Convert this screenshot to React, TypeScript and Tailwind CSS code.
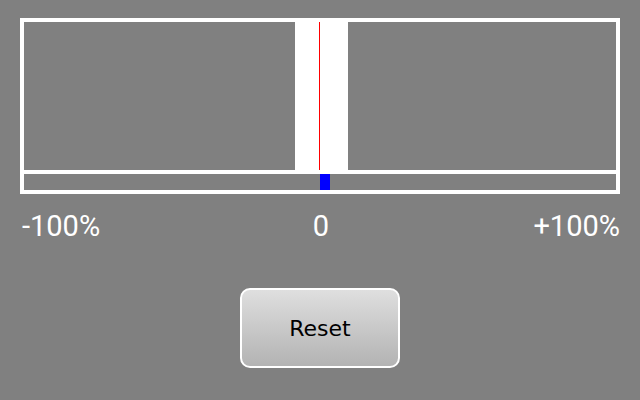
export default function App() {
  return (
    <div className="w-[640px] h-[400px] bg-[#808080] flex flex-col items-center pt-[18px]">
      {/* meter box */}
      <div className="w-[600px] border-4 border-white flex flex-col">
        <div className="h-[148px] flex">
          <div className="w-[271px]" />
          <div className="w-[53px] bg-white flex">
            <div className="w-[24px]" />
            <div className="w-px bg-[#ff0000]" />
          </div>
          <div className="flex-1" />
        </div>
        <div className="h-[4px] bg-white" />
        <div className="h-[16px] flex">
          <div className="w-[296px]" />
          <div className="w-[10px] bg-[#0000ff]" />
        </div>
      </div>

      <div
        className="w-[600px] grid grid-cols-3 mt-[18px] pl-[2px] text-white text-[29px] leading-[29px]"
        style={{ fontFamily: "Roboto, 'Liberation Sans', sans-serif" }}
      >
        <span className="text-left">-100%</span>
        <span className="text-center">0</span>
        <span className="text-right">+100%</span>
      </div>

      <button
        className="mt-[47px] w-[160px] h-[80px] rounded-[10px] border-2 border-white bg-gradient-to-b from-[#dfdfdf] to-[#b3b3b3] text-black text-[22px]"
        style={{ fontFamily: "'DejaVu Sans', sans-serif" }}
      >
        Reset
      </button>
    </div>
  );
}
